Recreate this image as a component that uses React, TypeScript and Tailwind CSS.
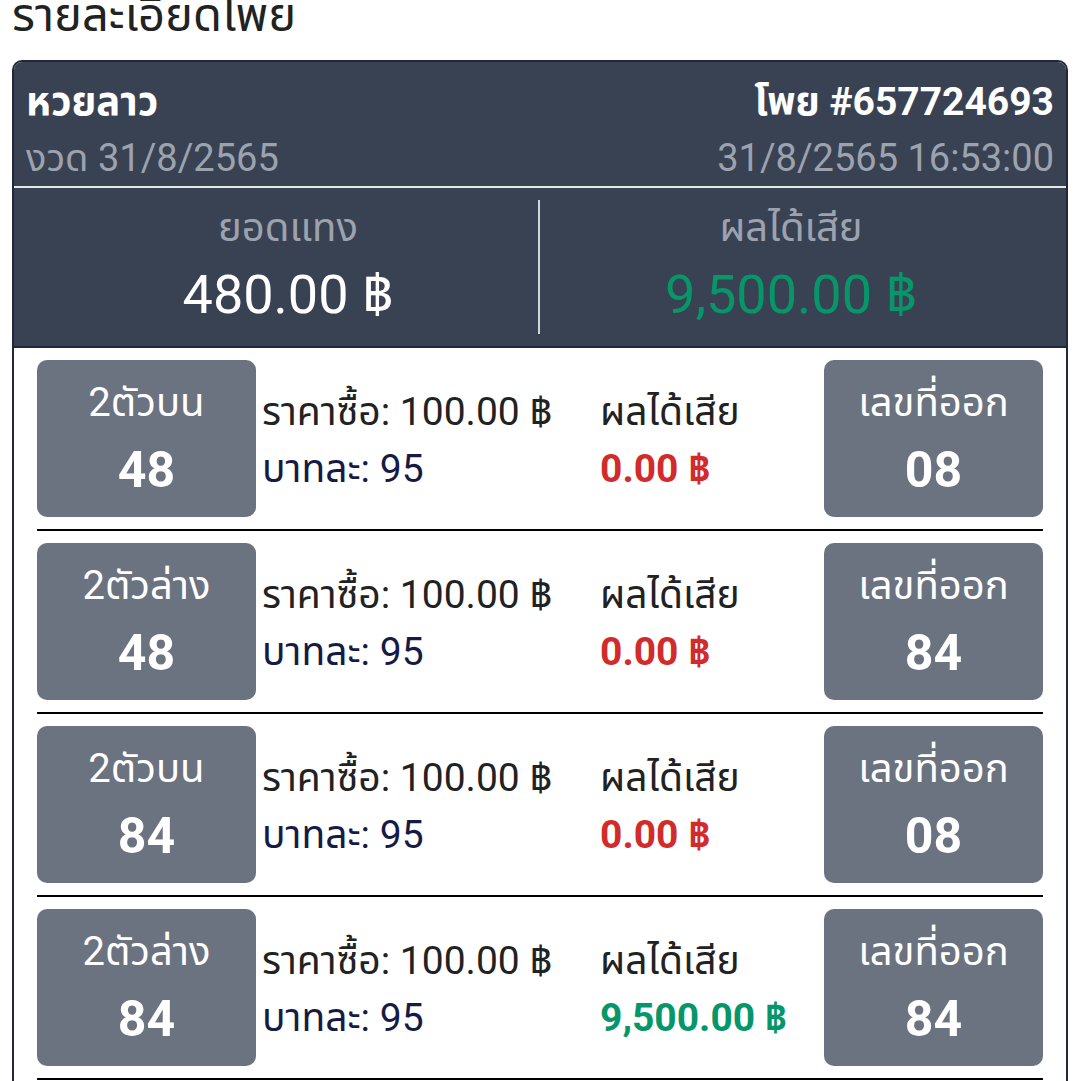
import React from 'react';

type Bet = {
  kind: string;
  number: string;
  price: string;
  rate: string;
  result: string;
  won: boolean;
  drawn: string;
};

const bets: Bet[] = [
  { kind: '2ตัวบน', number: '48', price: '100.00', rate: '95', result: '0.00', won: false, drawn: '08' },
  { kind: '2ตัวล่าง', number: '48', price: '100.00', rate: '95', result: '0.00', won: false, drawn: '84' },
  { kind: '2ตัวบน', number: '84', price: '100.00', rate: '95', result: '0.00', won: false, drawn: '08' },
  { kind: '2ตัวล่าง', number: '84', price: '100.00', rate: '95', result: '9,500.00', won: true, drawn: '84' },
];

function NumberBox({ label, value }: { label: string; value: string }) {
  return (
    <div className="w-[219px] h-[157px] shrink-0 rounded-[10px] bg-[#6b7280] text-white flex flex-col items-center pt-[17px]">
      <span className="text-[40px] leading-[52px]">{label}</span>
      <span className="text-[50px] leading-[82px] font-bold">{value}</span>
    </div>
  );
}

export default function App() {
  return (
    <div
      className="w-[1080px] h-[1081px] overflow-hidden bg-white"
      style={{ fontFamily: 'Roboto, "Noto Sans Thai", "Noto Sans", sans-serif' }}
    >
      {/* Page title, scrolled slightly off the top */}
      <h1 className="text-[47px] leading-[48px] text-[#222222] px-3 -mt-[9px]">รายละเอียดโพย</h1>

      <div className="mx-3 mt-[21px] border-2 border-[#1f2937] rounded-[10px] overflow-hidden">
        {/* Ticket header */}
        <div className="bg-[#394253]">
          <div className="flex justify-between px-3 pt-[12px]">
            <div>
              <p className="text-[40px] leading-[56px] font-bold text-white">หวยลาว</p>
              <p className="text-[38px] leading-[56px] text-[#9ca3af]">งวด 31/8/2565</p>
            </div>
            <div className="text-right">
              <p className="text-[39px] leading-[56px] font-bold text-white">โพย #657724693</p>
              <p className="text-[38px] leading-[56px] text-[#9ca3af]">31/8/2565 16:53:00</p>
            </div>
          </div>
          <div className="h-[2px] bg-[#e5e7eb]" />
          <div className="grid grid-cols-2 px-[24px] py-3 border-b-2 border-[#1f2937]">
            <div className="flex flex-col items-center border-r-2 border-[#d1d5db]">
              <span className="text-[40px] leading-[56px] text-[#9ca3af]">ยอดแทง</span>
              <span className="text-[54px] leading-[78px] text-white">480.00 ฿</span>
            </div>
            <div className="flex flex-col items-center">
              <span className="text-[40px] leading-[56px] text-[#9ca3af]">ผลได้เสีย</span>
              <span className="text-[54px] leading-[78px] text-[#079669]">9,500.00 ฿</span>
            </div>
          </div>
        </div>

        {/* Bet rows (list continues below the fold) */}
        <div className="px-[23px] pb-[40px]">
          {bets.map((b, i) => (
            <div key={i} className="flex py-[12px] border-b-2 border-black">
              <NumberBox label={b.kind} value={b.number} />
              <div className="w-[344px] pl-[6px] pt-[24px]">
                <p className="text-[39px] leading-[57px] text-[#222222]">ราคาซื้อ: {b.price} ฿</p>
                <p className="text-[39px] leading-[57px] text-[#161b45]">บาทละ: {b.rate}</p>
              </div>
              <div className="flex-1 pt-[24px]">
                <p className="text-[39px] leading-[57px] text-[#222222]">ผลได้เสีย</p>
                <p className={`text-[39px] leading-[57px] font-bold ${b.won ? 'text-[#079669]' : 'text-[#d22b2b]'}`}>
                  {b.result} ฿
                </p>
              </div>
              <NumberBox label="เลขที่ออก" value={b.drawn} />
            </div>
          ))}
        </div>
      </div>
    </div>
  );
}
